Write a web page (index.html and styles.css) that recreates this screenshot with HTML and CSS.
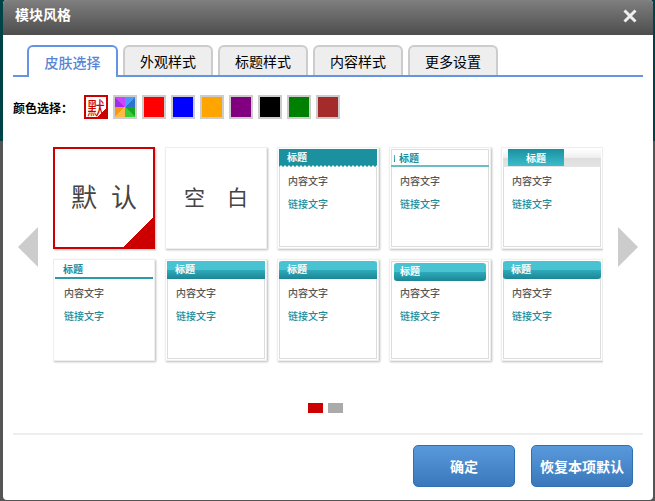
FILE: index.html
```html
<!doctype html>
<html lang="zh-CN">
<head>
<meta charset="UTF-8">
<meta name="viewport" content="width=device-width,initial-scale=1">
<title>模块风格</title>
<link rel="stylesheet" href="styles.css">
</head>
<body>

<div class="dialog" role="dialog" aria-labelledby="dialogTitle">

  <!-- 标题栏 -->
  <header class="dialog-head">
    <h1 class="dialog-title" id="dialogTitle">模块风格</h1>
    <button class="close" type="button" aria-label="关闭">
      <svg width="14" height="14" viewBox="0 0 14 14"><path d="M1.500 1.500l11 11M12.500 1.500l-11 11" stroke="#eee" stroke-width="3" fill="none"/></svg>
    </button>
  </header>

  <!-- 选项卡 -->
  <div class="tabs" role="tablist">
    <button class="tab active" type="button" role="tab" aria-selected="true">皮肤选择</button>
    <button class="tab" type="button" role="tab">外观样式</button>
    <button class="tab" type="button" role="tab">标题样式</button>
    <button class="tab" type="button" role="tab">内容样式</button>
    <button class="tab" type="button" role="tab">更多设置</button>
  </div>

  <!-- 颜色选择 -->
  <div class="colors" role="group" aria-labelledby="colorLabel">
    <span class="colors-label" id="colorLabel">颜色选择：</span>
    <button class="swatch default" type="button">默</button>
    <button class="swatch multi" type="button" aria-label="多彩"></button>
    <button class="swatch red" type="button" aria-label="红"></button>
    <button class="swatch blue" type="button" aria-label="蓝"></button>
    <button class="swatch orange" type="button" aria-label="橙"></button>
    <button class="swatch purple" type="button" aria-label="紫"></button>
    <button class="swatch black" type="button" aria-label="黑"></button>
    <button class="swatch green" type="button" aria-label="绿"></button>
    <button class="swatch brown" type="button" aria-label="棕"></button>
  </div>

  <!-- 皮肤列表 -->
  <div class="carousel">
    <button class="arrow" type="button" aria-label="上一页">
      <svg width="20" height="40" viewBox="0 0 20 40"><path d="M20 0v40L0 20z" fill="#ccc"/></svg>
    </button>
    <div class="skins">
      <button class="skin selected" type="button"><span class="word">默</span><span class="word">认</span></button>
      <button class="skin blank" type="button"><span class="word">空</span><span class="word">白</span></button>
      <button class="skin" type="button">
        <span class="frame wave"><span class="head">标题</span><span class="text">内容文字</span><span class="link">链接文字</span></span>
      </button>
      <button class="skin" type="button">
        <span class="frame marked"><span class="head">标题</span><span class="text">内容文字</span><span class="link">链接文字</span></span>
      </button>
      <button class="skin" type="button">
        <span class="frame tabbed"><span class="head"><span class="label">标题</span></span><span class="text">内容文字</span><span class="link">链接文字</span></span>
      </button>
      <button class="skin" type="button">
        <span class="frame lined"><span class="head">标题</span><span class="text">内容文字</span><span class="link">链接文字</span></span>
      </button>
      <button class="skin" type="button">
        <span class="frame glossy"><span class="head">标题</span><span class="text">内容文字</span><span class="link">链接文字</span></span>
      </button>
      <button class="skin" type="button">
        <span class="frame glossy round-top"><span class="head">标题</span><span class="text">内容文字</span><span class="link">链接文字</span></span>
      </button>
      <button class="skin" type="button">
        <span class="frame glossy inset"><span class="head">标题</span><span class="text">内容文字</span><span class="link">链接文字</span></span>
      </button>
      <button class="skin" type="button">
        <span class="frame glossy round"><span class="head">标题</span><span class="text">内容文字</span><span class="link">链接文字</span></span>
      </button>
    </div>
    <button class="arrow" type="button" aria-label="下一页">
      <svg width="20" height="40" viewBox="0 0 20 40"><path d="M0 0v40l20-20z" fill="#ccc"/></svg>
    </button>
  </div>

  <div class="pager">
    <button class="page current" type="button" aria-label="第1页"></button>
    <button class="page" type="button" aria-label="第2页"></button>
  </div>

  <!-- 底部按钮 -->
  <footer class="actions">
    <button class="btn" type="button">确定</button>
    <button class="btn" type="button">恢复本项默认</button>
  </footer>
</div>

</body>
</html>
```

FILE: styles.css
```css
*{box-sizing:border-box}
html{min-height:100%;background:linear-gradient(#004346 141px,#555 141px) no-repeat #555}
body{
  margin:0;padding:0 2px 1px 3px;
  font-family:"Noto Sans CJK SC",sans-serif;font-size:14px;color:#000}
button{margin:0;padding:0;border:none;background:none;font-family:inherit;color:inherit;cursor:pointer}
svg{display:block}

.dialog{background:#fff;border-radius:4px;overflow:hidden}

/* ---- 标题栏 ---- */
.dialog-head{
  display:flex;justify-content:space-between;align-items:flex-start;
  height:35px;padding:4px 16px 0 12px;
  background:linear-gradient(#7f7f7f,#4d4d4d);color:#fff}
.dialog-title{margin:0;font-size:14px;line-height:20px;font-weight:bold}
.close{padding:5px 0}

/* ---- 选项卡 ---- */
.tabs{
  display:flex;align-items:flex-end;gap:5px;
  margin:10px 10px 0;padding-left:14px;
  border-bottom:2px solid #6495e5}
.tab{
  width:90px;height:30px;
  border:2px solid #ccc;border-bottom:none;border-radius:6px 6px 0 0;
  background:#eee;font-size:14px;line-height:26px}
.tab.active{
  width:91px;height:32px;margin-bottom:-2px;
  border-color:#6495e5;background:#fff;color:#5b84d6;font-weight:500}

/* ---- 颜色选择 ---- */
.colors{display:flex;align-items:center;gap:5px;margin:18px 10px 0}
.colors-label{width:66px;font-size:12px;font-weight:bold;white-space:nowrap}
.swatch{width:24px;height:24px;border:2px solid #ccc}
.swatch.default{
  border-color:#c00;color:#c00;font-size:18px;line-height:20px;
  background:linear-gradient(135deg,#fff 80%,#c00 80%)}
.swatch.multi{
  background:conic-gradient(#4b9bff 45deg,#2b73cc 0 90deg,#1ea51e 0 135deg,#37cf37 0 180deg,
    #ffb94a 0 225deg,#f59a12 0 270deg,#a32bea 0 315deg,#cc44ff 0)}
.swatch.red{background:red}
.swatch.blue{background:blue}
.swatch.orange{background:orange}
.swatch.purple{background:purple}
.swatch.black{background:black}
.swatch.green{background:green}
.swatch.brown{background:brown}

/* ---- 皮肤列表 ---- */
.carousel{display:flex;justify-content:center;align-items:center;gap:15px;margin-top:28px}
.arrow{margin-bottom:28px}
.skins{
  display:grid;grid-template-columns:repeat(5,102px);gap:10px;
  padding-bottom:14px;overflow:hidden}
.skin{
  display:flex;justify-content:center;align-items:center;gap:14px;
  height:102px;padding:1px;
  border:1px solid #eee;background:#fff;box-shadow:1px 1px 2px #bbb;color:#444}
.skin.selected{
  border:2px solid #c00;
  background:linear-gradient(135deg,#fff 0 calc(100% - 21px),#c00 calc(100% - 21px))}
.word{padding-bottom:4px;font-size:26px;line-height:32px}
.blank{gap:22px}
.blank .word{font-size:21px}

.frame{
  display:flex;flex-direction:column;width:100%;height:100%;
  border:1px solid #ddd;border-top:none;
  font-size:10px;line-height:16px;text-align:left}
.head{height:18px;margin:0 -1px;padding-left:8px;color:#fff;font-weight:bold}
.text{margin-top:6px;padding-left:8px;color:#555}
.link{margin-top:7px;padding-left:8px;color:#1b8c9a}
.text,.link{font-weight:500}

.wave .head{
  background:
    radial-gradient(circle at 2px 3px,#fff 1px,transparent 2px) 0 bottom/4px 3px repeat-x,
    #1b909f}
.marked{border-top:1px solid #ddd}
.marked .head{
  height:17px;padding-left:8px;color:#1b8c9a;line-height:15px;
  border-bottom:2px solid #6bbcc6;
  background:linear-gradient(#6bbcc6,#1b8c9a) 3px 5px/1px 7px no-repeat}
.tabbed .head{
  padding-left:5px;line-height:17px;
  background:linear-gradient(#fff,#eee 50%,#ddd 50%,#e4e4e4)}
.tabbed .label{display:block;width:56px;height:17px;text-align:center;background:linear-gradient(#1b909f,#3bbccb)}
.lined{border:none}
.lined .head{margin:0;color:#1b8c9a;border-bottom:2px solid #2a9ba9}
.lined .text,.lined .link{padding-left:9px}
.glossy .head{
  background:linear-gradient(#49c3d1 50%,#2fabb9 50%,#1b8695)}
.round-top .head{border-radius:3px 3px 0 0}
.round .head{border-radius:3px}
.inset{border-top:1px solid #ddd}
.inset .head{margin:1px 2px 0;padding-left:6px;border-radius:3px}
.inset .text{margin-top:4px}

/* ---- 分页 ---- */
.pager{display:flex;justify-content:center;gap:5px;margin-top:28px;padding-right:5px}
.page{width:15px;height:10px;background:#aaa}
.page.current{background:#c00}

/* ---- 底部按钮 ---- */
.actions{
  display:flex;justify-content:flex-end;gap:16px;
  margin:20px 10px 0;padding:10px 10px 13px;
  border-top:2px solid #eee}
.btn{
  width:102px;height:42px;
  border:1px solid #2f6fb3;border-radius:5px;
  background:linear-gradient(#5899dc,#3a78bb);
  color:#fff;font-size:14px;line-height:38px;font-weight:bold}
```
